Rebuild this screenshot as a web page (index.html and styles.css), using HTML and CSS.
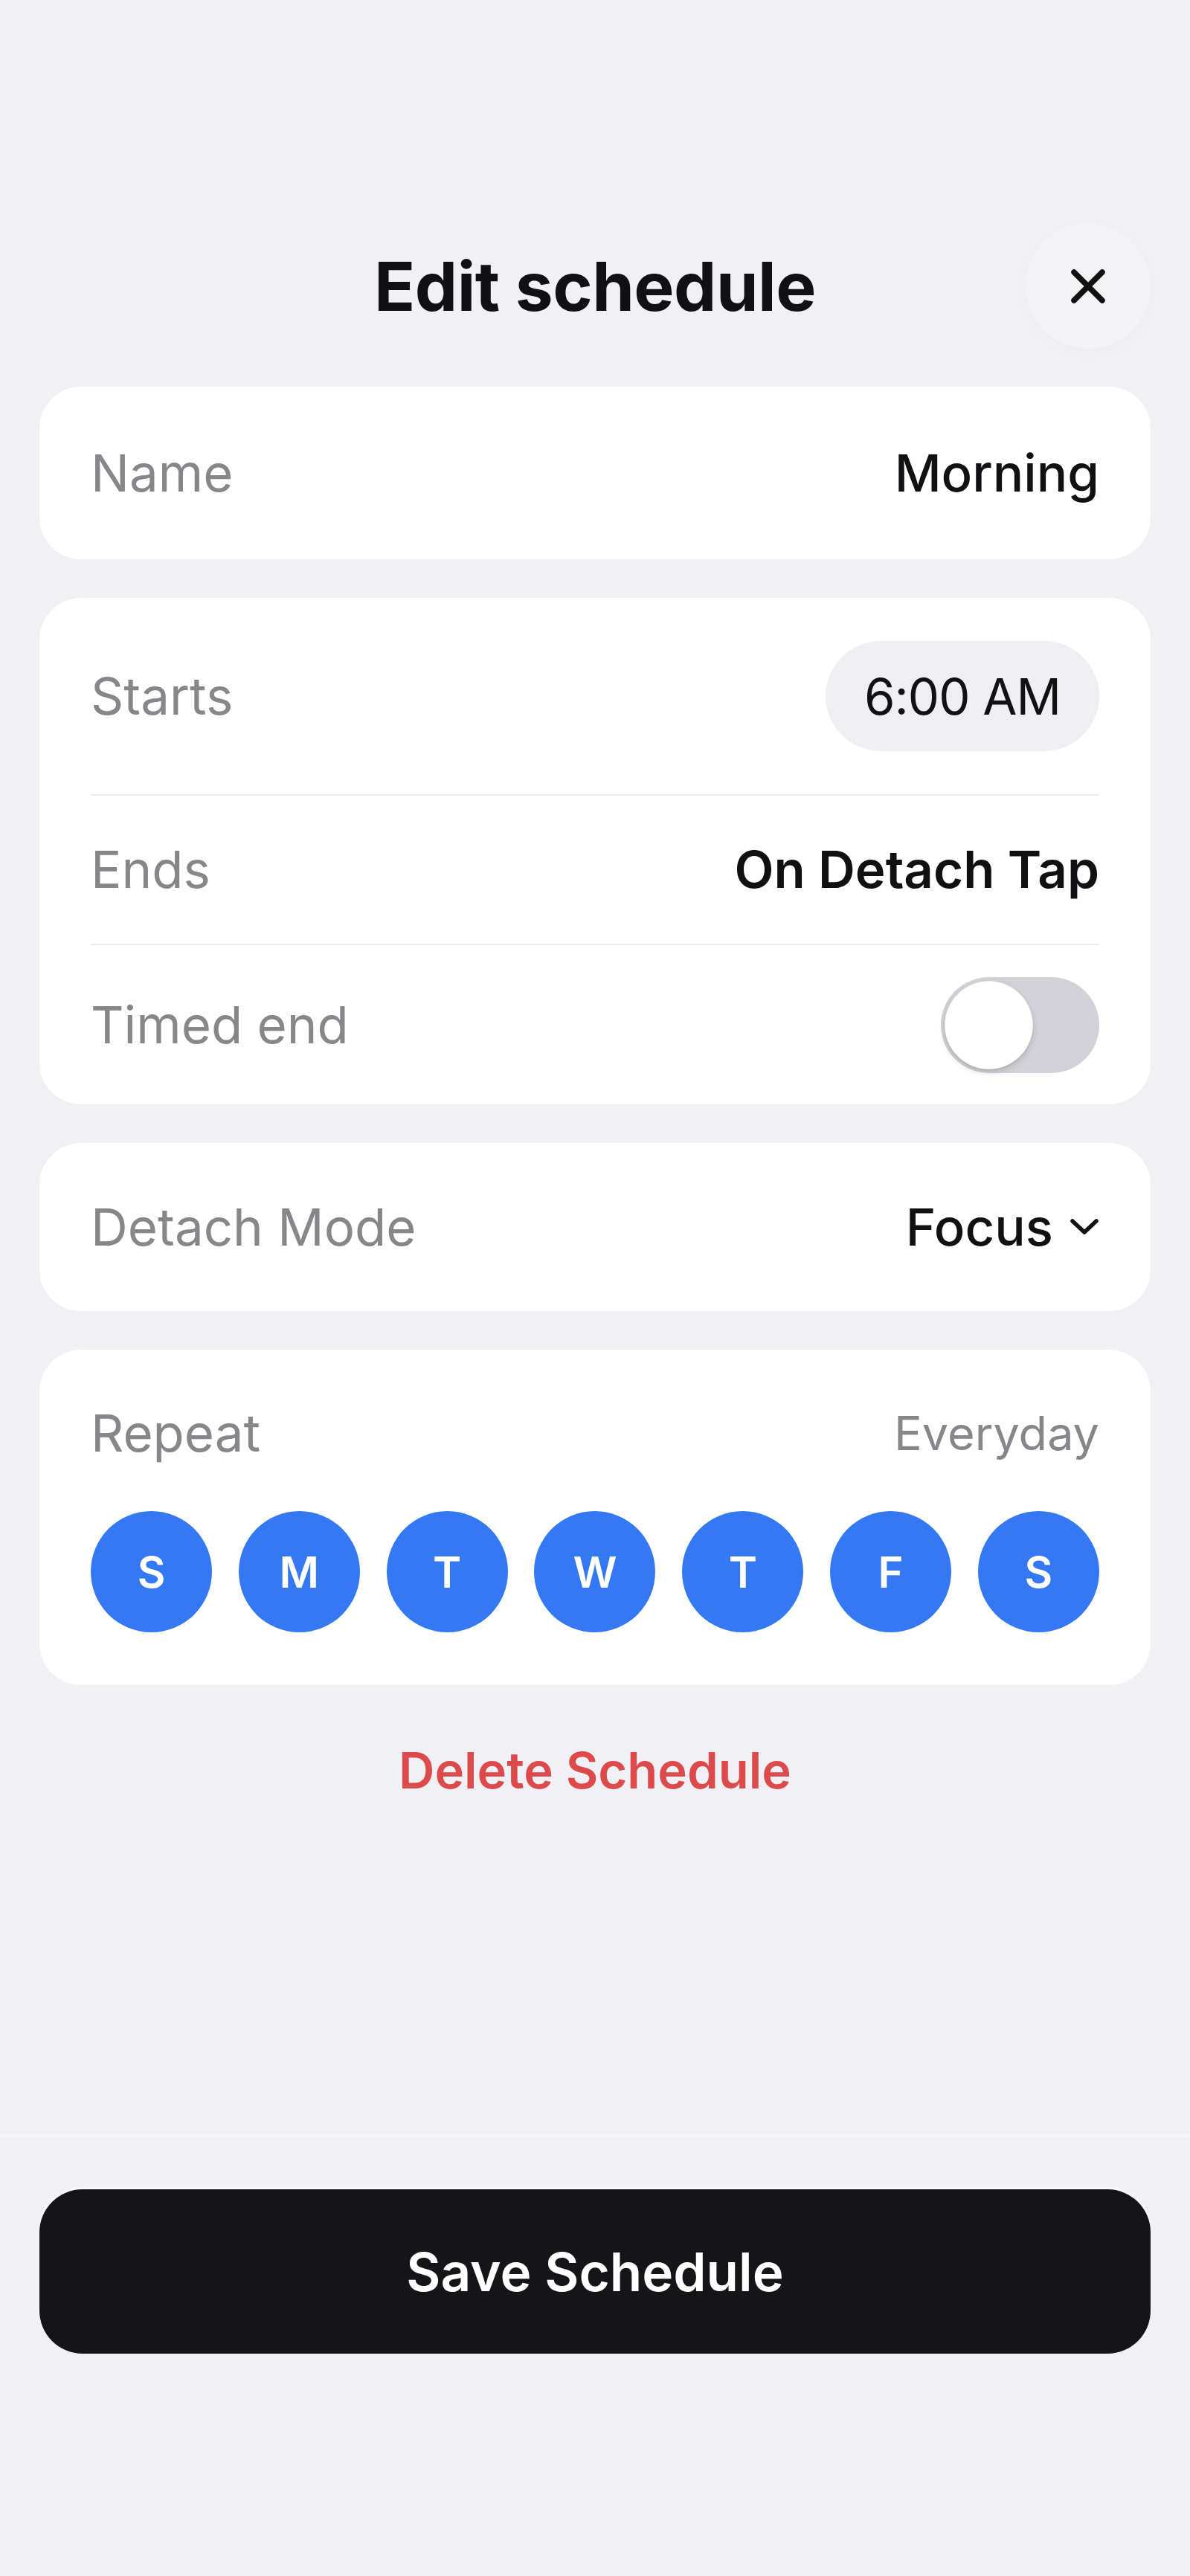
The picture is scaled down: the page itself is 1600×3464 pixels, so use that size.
FILE: index.html
```html
<!DOCTYPE html>
<html lang="en">
<head>
  <meta charset="UTF-8" />
  <meta name="viewport" content="width=device-width, initial-scale=1" />
  <title>Edit schedule</title>
  <link rel="stylesheet" href="styles.css">
</head>
<body>
  <header class="top-bar">
    <span></span>
    <h1>Edit schedule</h1>
    <button class="close-btn" aria-label="Close">
      <svg width="48" height="48" viewBox="0 0 48 48">
        <path d="M5 5 L43 43 M43 5 L5 43" stroke="#111" stroke-width="7.5" stroke-linecap="round" fill="none" />
      </svg>
    </button>
  </header>

  <main class="content">
    <section class="card card-single">
      <span class="label">Name</span>
      <span class="value">Morning</span>
    </section>

    <section class="card card-list">
      <div class="row row-starts">
        <span class="label">Starts</span>
        <span class="time-pill">6:00 AM</span>
      </div>
      <div class="row row-ends">
        <span class="label">Ends</span>
        <span class="value value-strong">On Detach Tap</span>
      </div>
      <div class="row row-timed">
        <span class="label">Timed end</span>
        <span class="switch"><span class="knob"></span></span>
      </div>
    </section>

    <section class="card card-single card-mode">
      <span class="label">Detach Mode</span>
      <span class="value dropdown">
        Focus
        <svg width="40" height="24" viewBox="0 0 40 24">
          <polyline points="4,4 20,19 36,4" stroke="#111" stroke-width="5.5" stroke-linecap="round" stroke-linejoin="round" fill="none" />
        </svg>
      </span>
    </section>

    <section class="card card-repeat">
      <div class="repeat-head">
        <span class="label">Repeat</span>
        <span class="repeat-summary">Everyday</span>
      </div>
      <div class="days">
        <span class="day">S</span>
        <span class="day">M</span>
        <span class="day">T</span>
        <span class="day">W</span>
        <span class="day">T</span>
        <span class="day">F</span>
        <span class="day">S</span>
      </div>
    </section>

    <button class="delete-btn">Delete Schedule</button>
  </main>

  <footer class="bottom-bar">
    <button class="save-btn">Save Schedule</button>
  </footer>
</body>
</html>
```

FILE: styles.css
```css
/* Reset & base */
* {
  box-sizing: border-box;
}
html, body {
  margin: 0;
  padding: 0;
}
body {
  font-family: Inter, "Noto Sans", "Liberation Sans", sans-serif;
  background: #f1f1f5;
  color: #111114;
  min-height: 100vh;
  display: flex;
  flex-direction: column;
}
button {
  font-family: inherit;
  border: none;
  cursor: pointer;
}

/* Header */
.top-bar {
  display: grid;
  grid-template-columns: 168px 1fr 168px;
  align-items: center;
  padding: 301px 53px 0 53px;
}
.top-bar h1 {
  margin: 0;
  text-align: center;
  font-size: 91px;
  font-weight: 700;
  letter-spacing: -0.5px;
  line-height: 1;
}
.close-btn {
  width: 168px;
  height: 168px;
  border-radius: 50%;
  background: #f3f3f6;
  box-shadow: 0 4px 22px rgba(0, 0, 0, 0.025);
  display: flex;
  align-items: center;
  justify-content: center;
  justify-self: end;
  padding: 0;
}

/* Cards */
.content {
  display: flex;
  flex-direction: column;
  gap: 52px;
  padding: 51px 53px 0 53px;
}
.card {
  background: white;
  border-radius: 56px;
  padding: 0 69px;
}
.card-single {
  height: 232px;
  display: flex;
  align-items: center;
  justify-content: space-between;
}
.card-mode {
  height: 226px;
}
.label {
  font-size: 69px;
  color: #86868b;
  line-height: 1.2;
}
.value {
  font-size: 69px;
  font-weight: 500;
  line-height: 1.2;
}
.value-strong {
  font-weight: 600;
}

.row {
  display: flex;
  align-items: center;
  justify-content: space-between;
  border-bottom: 2px solid #ececef;
}
.row-starts {
  height: 266px;
}
.row-ends {
  height: 201px;
}
.row-timed {
  height: 214px;
  border-bottom: none;
}
.time-pill {
  background: #efeff1;
  border-radius: 80px;
  height: 148px;
  padding: 0 52px;
  display: flex;
  align-items: center;
  font-size: 67px;
  letter-spacing: -1px;
}

.switch {
  width: 213px;
  height: 129px;
  border-radius: 65px;
  background: #d2d2d8;
  padding: 5px;
  display: flex;
  align-items: center;
}
.knob {
  width: 119px;
  height: 119px;
  border-radius: 50%;
  background: white;
  border: 1px solid rgba(0, 0, 0, 0.06);
  box-shadow: 0 4px 10px rgba(0, 0, 0, 0.14), 0 1px 2px rgba(0, 0, 0, 0.1);
}

.dropdown {
  display: flex;
  align-items: center;
  gap: 22px;
}

/* Repeat */
.card-repeat {
  padding: 72px 69px 71px 69px;
}
.repeat-head {
  display: flex;
  align-items: center;
  justify-content: space-between;
  height: 80px;
}
.repeat-summary {
  font-size: 63px;
  color: #86868b;
}
.days {
  margin-top: 65px;
  display: flex;
  justify-content: space-between;
}
.day {
  width: 163px;
  height: 163px;
  border-radius: 50%;
  background: #3478f4;
  color: white;
  font-size: 58px;
  font-weight: 600;
  display: flex;
  align-items: center;
  justify-content: center;
}

.delete-btn {
  background: none;
  color: #dc4a4c;
  font-size: 67px;
  font-weight: 600;
  margin-top: 22px;
  height: 80px;
  align-self: center;
  padding: 0;
}

/* Footer */
.bottom-bar {
  margin-top: auto;
  border-top: 2px solid #f6f6f9;
  padding: 71px 53px 299px 53px;
}
.save-btn {
  width: 100%;
  height: 221px;
  border-radius: 58px;
  background: #141419;
  color: white;
  font-size: 71px;
  font-weight: 600;
  box-shadow: 0 -2px 4px rgba(255, 255, 255, 0.9);
}
```
